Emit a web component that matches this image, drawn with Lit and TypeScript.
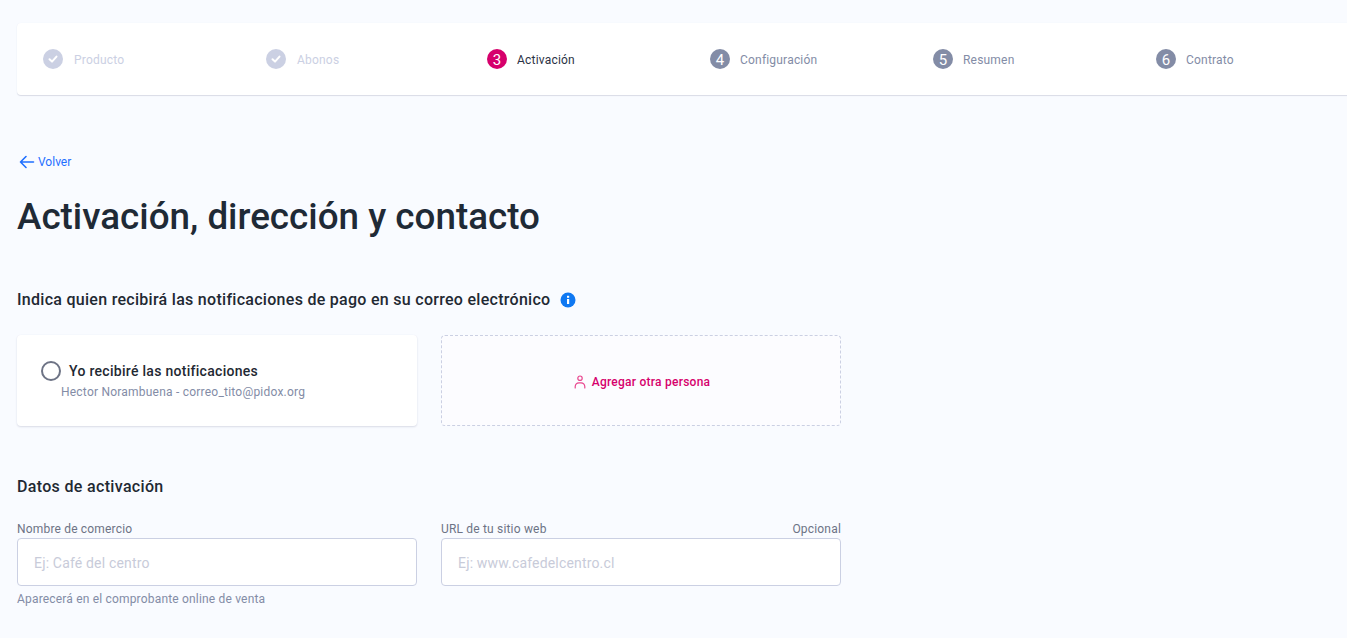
import { LitElement, html, css, svg } from "lit";
import { customElement } from "lit/decorators.js";

const steps = [
  { label: "Producto", state: "done" },
  { label: "Abonos", state: "done" },
  { label: "Activación", state: "active", n: 3 },
  { label: "Configuración", state: "todo", n: 4 },
  { label: "Resumen", state: "todo", n: 5 },
  { label: "Contrato", state: "todo", n: 6 },
];

@customElement("app-root")
export class AppRoot extends LitElement {
  static styles = css`
    :host {
      display: block;
      height: 638px;
      overflow: hidden;
      background: #f9fbff;
      font-family: Roboto, "Liberation Sans", sans-serif;
      color: #1f2933;
    }
    .page { padding: 23px 0 0 17px; }
    .stepper {
      display: flex;
      width: 1360px;
      height: 72px;
      box-sizing: border-box;
      padding-left: 26px;
      align-items: center;
      background: #fff;
      border-radius: 4px;
      box-shadow: 0 1px 1px #d9dbe6, 0 0 1px #eceef6;
    }
    .step {
      flex: 0 0 223px;
      display: flex;
      align-items: center;
      font-size: 12px;
      letter-spacing: 0.2px;
      line-height: 20px;
      color: #838ca6;
    }
    .step .name { padding-top: 2px; }
    .step.done { color: #cbd0e3; gap: 11px; }
    .step.active, .step.todo { gap: 10px; margin-left: -2px; margin-right: 2px; }
    .step.active { color: #2b3245; }
    .dot {
      width: 20px;
      height: 20px;
      box-sizing: border-box;
      border-radius: 50%;
      display: flex;
      align-items: center;
      justify-content: center;
      color: #fff;
      font-size: 15px;
      letter-spacing: 0;
      background: #838ca6;
    }
    .active .dot, .todo .dot { padding-top: 1px; }
    .done .dot { background: #cbd0e3; }
    .active .dot { background: #d6006c; }
    .back {
      display: flex;
      align-items: center;
      gap: 3px;
      margin: 58px 0 0 2px;
      height: 18px;
      font-size: 12px;
      color: #1f6fff;
    }
    h1 {
      margin: 22px 0 0;
      font-size: 36.8px;
      line-height: 48px;
      font-weight: 500;
      color: #1f2a36;
    }
    .heading {
      display: flex;
      align-items: center;
      gap: 10px;
      margin: 47px 0 0;
      font-size: 16px;
      letter-spacing: 0.285px;
      line-height: 24px;
      font-weight: 500;
    }
    .cols {
      display: grid;
      grid-template-columns: 400px 400px;
      gap: 24px;
    }
    .cards { margin-top: 23px; height: 91px; }
    .card {
      box-sizing: border-box;
      background: #fff;
      border-radius: 4px;
      box-shadow: 0 1px 2px #d9dbe6, 0 0 1px #eceef6;
      padding: 26px 0 0 24px;
    }
    .radio-row {
      display: flex;
      align-items: center;
      gap: 8px;
      font-size: 14px;
      letter-spacing: 0.29px;
      line-height: 20px;
      font-weight: 500;
    }
    .radio {
      width: 20px;
      height: 20px;
      box-sizing: border-box;
      border: 2px solid #6d7385;
      border-radius: 50%;
    }
    .sub {
      margin: 1px 0 0 20px;
      font-size: 12px;
      letter-spacing: 0.22px;
      line-height: 20px;
      color: #838ca6;
    }
    .add {
      box-sizing: border-box;
      border: 1px dashed #cbd0e3;
      border-radius: 4px;
      display: flex;
      align-items: center;
      justify-content: center;
      gap: 6px;
      padding: 2px 0 0 2px;
      font-size: 12px;
      letter-spacing: 0.25px;
      font-weight: 500;
      color: #d6006c;
      background: #fcfcff;
    }
    h2 {
      margin: 49px 0 0;
      font-size: 16px;
      letter-spacing: 0.33px;
      line-height: 24px;
      font-weight: 500;
    }
    .fields { margin-top: 22px; }
    .label {
      display: flex;
      justify-content: space-between;
      font-size: 12px;
      letter-spacing: 0.18px;
      line-height: 16px;
      color: #6d7385;
    }
    .input {
      box-sizing: border-box;
      height: 48px;
      margin-top: 1px;
      padding: 2px 0 0 16px;
      display: flex;
      align-items: center;
      background: #fff;
      border: 1px solid #cbd0e3;
      border-radius: 4px;
      font-size: 14px;
      letter-spacing: 0.17px;
      color: #c8cbd9;
    }
    .hint {
      margin-top: 5px;
      font-size: 12px;
      letter-spacing: 0.18px;
      line-height: 16px;
      color: #838ca6;
    }
  `;

  private check() {
    return svg`<svg width="12" height="12" viewBox="0 0 12 12" fill="none" stroke="#fff" stroke-width="2" stroke-linecap="round" stroke-linejoin="round"><path d="M2.5 6.3 5 8.6 9.5 3.6"/></svg>`;
  }

  render() {
    return html`
      <div class="page">
        <div class="stepper">
          ${steps.map(
            (s) => html`<div class="step ${s.state}">
              <span class="dot">${s.state === "done" ? this.check() : s.n}</span>
              <span class="name">${s.label}</span>
            </div>`
          )}
        </div>
        <div class="back">
          <svg width="16" height="14" viewBox="0 0 16 14" fill="none" stroke="#1f6fff" stroke-width="1.6" stroke-linecap="round" stroke-linejoin="round"><path d="M14.5 7H1.5M7 1.5 1.5 7 7 12.5"/></svg>
          <span>Volver</span>
        </div>
        <h1>Activación, dirección y contacto</h1>
        <div class="heading">
          <span>Indica quien recibirá las notificaciones de pago en su correo electrónico</span>
          <svg width="16" height="16" viewBox="0 0 16 16"><circle cx="8" cy="8" r="7.5" fill="#0f78f2"/><rect x="7" y="7" width="2.2" height="5" fill="#fff"/><rect x="7" y="3.8" width="2.2" height="2" fill="#fff"/></svg>
        </div>
        <div class="cols cards">
          <div class="card">
            <div class="radio-row"><span class="radio"></span><span>Yo recibiré las notificaciones</span></div>
            <div class="sub">Hector Norambuena - correo_tito@pidox.org</div>
          </div>
          <div class="add">
            <svg width="12" height="14" viewBox="0 0 12 14" fill="none" stroke="#e8478f" stroke-width="1.2" stroke-linecap="round"><circle cx="6" cy="3.2" r="2.2"/><path d="M1.2 13v-1.5A4 4 0 0 1 5 7.8h2a4 4 0 0 1 3.8 3.7V13"/></svg>
            <span>Agregar otra persona</span>
          </div>
        </div>
        <h2>Datos de activación</h2>
        <div class="cols fields">
          <div>
            <div class="label"><span>Nombre de comercio</span></div>
            <div class="input">Ej: Café del centro</div>
            <div class="hint">Aparecerá en el comprobante online de venta</div>
          </div>
          <div>
            <div class="label"><span>URL de tu sitio web</span><span>Opcional</span></div>
            <div class="input">Ej: www.cafedelcentro.cl</div>
          </div>
        </div>
      </div>
    `;
  }
}
